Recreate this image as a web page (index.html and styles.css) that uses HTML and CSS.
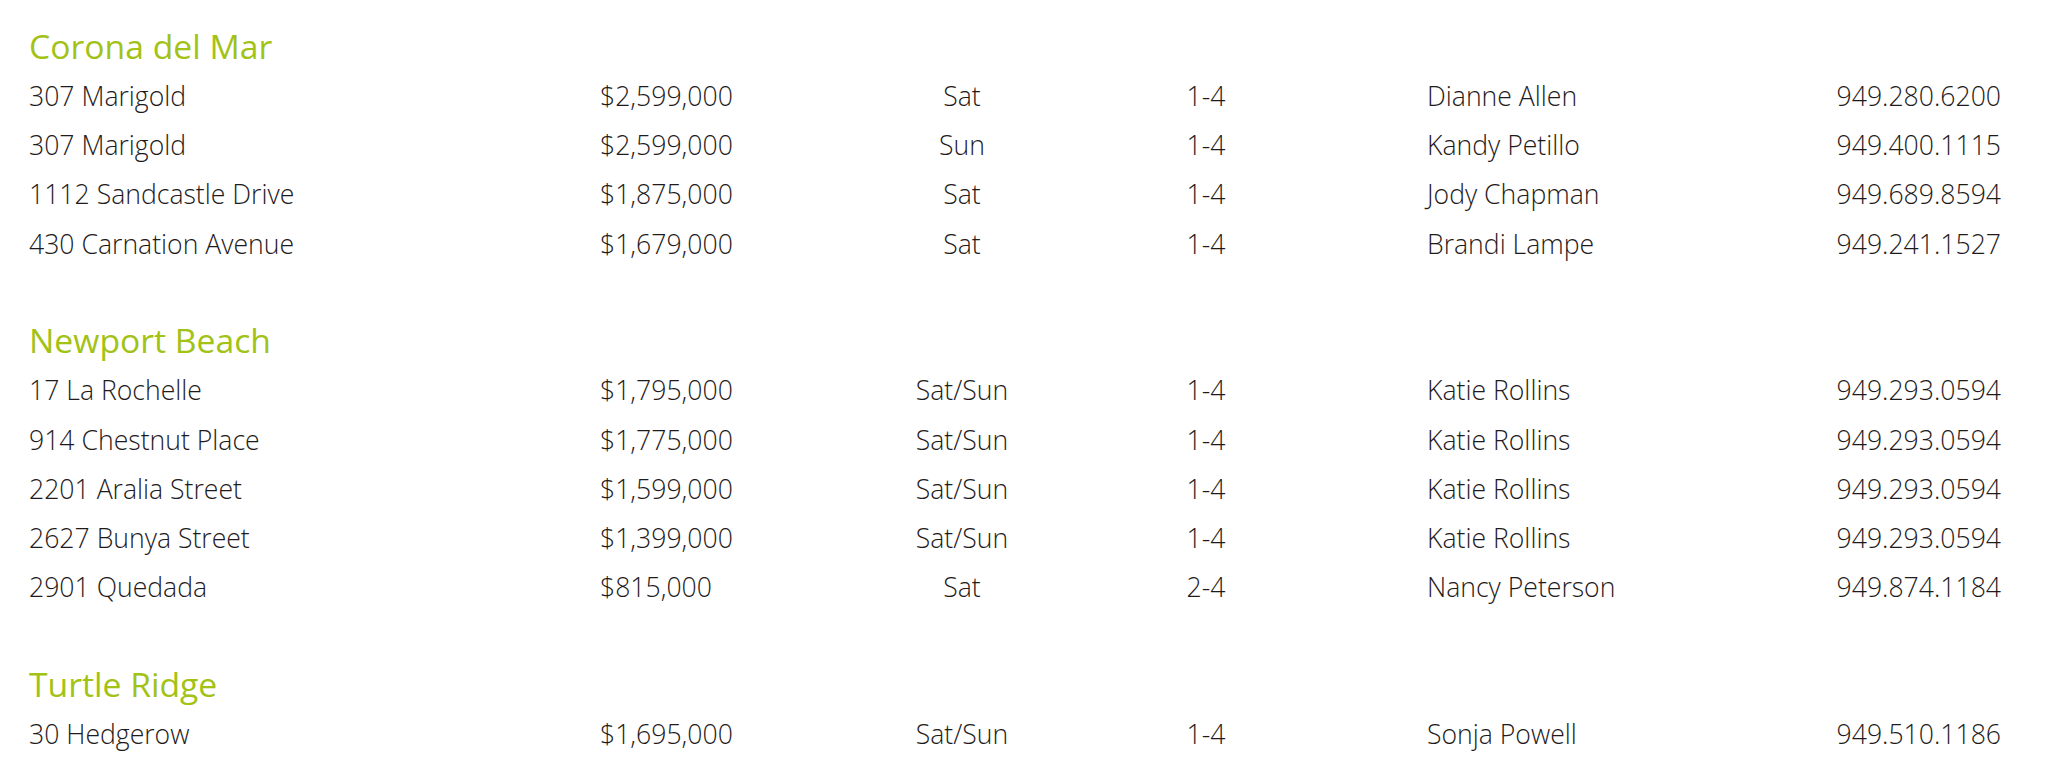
FILE: index.html
```html
<!DOCTYPE html>
<html lang="en">
<head>
<meta charset="utf-8">
<title>Open Houses</title>
<link rel="stylesheet" href="styles.css">
</head>
<body>
<main class="listings">
  <section class="area">
    <h2 class="area-title">Corona del Mar</h2>
    <div class="row"><span class="addr">307 Marigold</span><span class="price">$2,599,000</span><span class="day">Sat</span><span class="time">1-4</span><span class="agent">Dianne Allen</span><span class="phone">949.280.6200</span></div>
    <div class="row"><span class="addr">307 Marigold</span><span class="price">$2,599,000</span><span class="day">Sun</span><span class="time">1-4</span><span class="agent">Kandy Petillo</span><span class="phone">949.400.1115</span></div>
    <div class="row"><span class="addr">1112 Sandcastle Drive</span><span class="price">$1,875,000</span><span class="day">Sat</span><span class="time">1-4</span><span class="agent">Jody Chapman</span><span class="phone">949.689.8594</span></div>
    <div class="row"><span class="addr">430 Carnation Avenue</span><span class="price">$1,679,000</span><span class="day">Sat</span><span class="time">1-4</span><span class="agent">Brandi Lampe</span><span class="phone">949.241.1527</span></div>
  </section>
  <section class="area">
    <h2 class="area-title">Newport Beach</h2>
    <div class="row"><span class="addr">17 La Rochelle</span><span class="price">$1,795,000</span><span class="day">Sat/Sun</span><span class="time">1-4</span><span class="agent">Katie Rollins</span><span class="phone">949.293.0594</span></div>
    <div class="row"><span class="addr">914 Chestnut Place</span><span class="price">$1,775,000</span><span class="day">Sat/Sun</span><span class="time">1-4</span><span class="agent">Katie Rollins</span><span class="phone">949.293.0594</span></div>
    <div class="row"><span class="addr">2201 Aralia Street</span><span class="price">$1,599,000</span><span class="day">Sat/Sun</span><span class="time">1-4</span><span class="agent">Katie Rollins</span><span class="phone">949.293.0594</span></div>
    <div class="row"><span class="addr">2627 Bunya Street</span><span class="price">$1,399,000</span><span class="day">Sat/Sun</span><span class="time">1-4</span><span class="agent">Katie Rollins</span><span class="phone">949.293.0594</span></div>
    <div class="row"><span class="addr">2901 Quedada</span><span class="price">$815,000</span><span class="day">Sat</span><span class="time">2-4</span><span class="agent">Nancy Peterson</span><span class="phone">949.874.1184</span></div>
  </section>
  <section class="area">
    <h2 class="area-title">Turtle Ridge</h2>
    <div class="row"><span class="addr">30 Hedgerow</span><span class="price">$1,695,000</span><span class="day">Sat/Sun</span><span class="time">1-4</span><span class="agent">Sonja Powell</span><span class="phone">949.510.1186</span></div>
  </section>
</main>
</body>
</html>
```
FILE: styles.css
```css
html, body {
  margin: 0;
  padding: 0;
  background: #ffffff;
}

body {
  font-family: "Open Sans", "Noto Sans", "Liberation Sans", sans-serif;
  font-weight: 300;
  color: #1f1b1c;
}

.listings {
  padding: 21px 62px 0 29px;
  display: flex;
  flex-direction: column;
  gap: 46.5px;
}

.area {
  display: flex;
  flex-direction: column;
}

.area-title {
  margin: 0;
  font-size: 33.7px;
  line-height: 51px;
  font-weight: 400;
  color: #a2c215;
}

.row {
  display: grid;
  grid-template-columns: 571px 250px 224px 264px 1fr auto;
  font-size: 26.6px;
  line-height: 49.2px;
  white-space: nowrap;
}

.day,
.time {
  text-align: center;
}

.agent {
  padding-left: 89px;
}

.phone {
  text-align: right;
}
```
